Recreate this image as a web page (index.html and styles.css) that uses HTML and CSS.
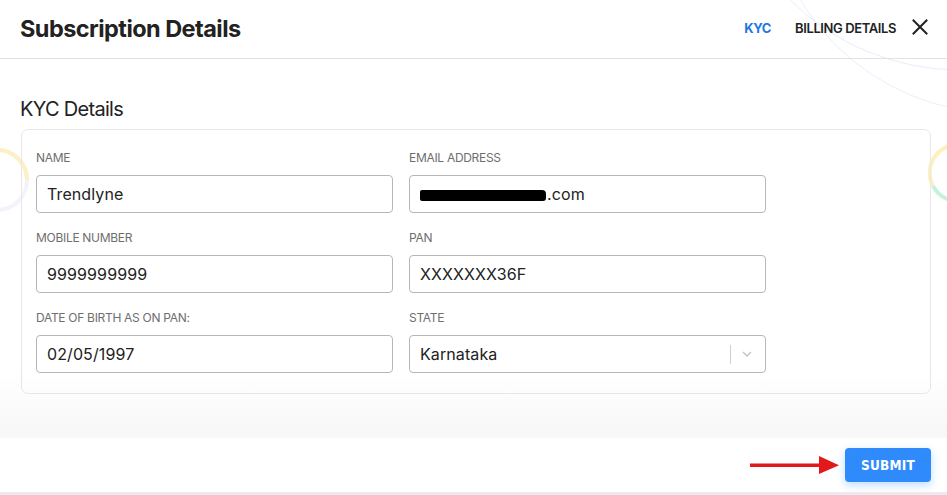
FILE: index.html
```html
<!DOCTYPE html>
<html lang="en">
<head>
<meta charset="utf-8">
<title>Subscription Details</title>
<link rel="stylesheet" href="styles.css">
</head>
<body>
<div class="modal">
  <svg class="deco deco-arcs" width="200" height="130" viewBox="747 0 200 130" aria-hidden="true">
    <circle cx="960" cy="-171" r="241" fill="none" stroke="#e6eefa" stroke-width="1"/>
    <circle cx="1000" cy="-120" r="233" fill="none" stroke="#e9f0fb" stroke-width="1"/>
  </svg>
  <svg class="deco deco-left" width="80" height="80" viewBox="-40 -40 80 80" aria-hidden="true">
    <circle cx="0" cy="0" r="30" fill="none" stroke="#f4f3fc" stroke-width="4"/>
    <path d="M -2 -30 A 30 30 0 0 1 30 0" fill="none" stroke="#fdf0c2" stroke-width="4"/>
    <path d="M -5 -29.6 A 30 30 0 0 1 0 -30" fill="none" stroke="#d9d2f7" stroke-width="4"/>
  </svg>
  <svg class="deco deco-right" width="40" height="70" viewBox="-30 -35 40 70" aria-hidden="true">
    <path d="M 8 -27 A 28 28 0 0 0 -25 13" fill="none" stroke="#fcefc0" stroke-width="4"/>
    <path d="M -25 13 A 28 28 0 0 0 8 27" fill="none" stroke="#c5f2da" stroke-width="4"/>
    <path d="M 18 -22 A 28 28 0 0 0 8 -27" fill="none" stroke="#d6ddd6" stroke-width="4"/>
  </svg>

  <header class="modal-header">
    <h1 class="modal-title">Subscription Details</h1>
    <nav class="tabs">
      <span class="tab tab-active">KYC</span>
      <span class="tab">BILLING DETAILS</span>
      <button class="close" aria-label="Close">
        <svg width="16" height="16" viewBox="0 0 16 16"><path d="M1.5 1.5 L14.5 14.5 M14.5 1.5 L1.5 14.5" stroke="#222" stroke-width="2" stroke-linecap="square"/></svg>
      </button>
    </nav>
  </header>

  <main class="modal-body">
    <h2 class="section-title">KYC Details</h2>
    <section class="card">
      <div class="form-grid">
        <div class="field">
          <label class="label">NAME</label>
          <div class="input">Trendlyne</div>
        </div>
        <div class="field">
          <label class="label">EMAIL ADDRESS</label>
          <div class="input"><span class="redact"></span>.com</div>
        </div>
        <div class="field">
          <label class="label">MOBILE NUMBER</label>
          <div class="input">9999999999</div>
        </div>
        <div class="field">
          <label class="label">PAN</label>
          <div class="input">XXXXXXX36F</div>
        </div>
        <div class="field">
          <label class="label">DATE OF BIRTH AS ON PAN:</label>
          <div class="input">02/05/1997</div>
        </div>
        <div class="field">
          <label class="label">STATE</label>
          <div class="input select">
            <span class="select-value">Karnataka</span>
            <span class="select-sep"></span>
            <svg class="chev" width="10" height="6" viewBox="0 0 10 6"><path d="M1 1 L5 5 L9 1" fill="none" stroke="#c6c6c6" stroke-width="1.5"/></svg>
          </div>
        </div>
      </div>
    </section>
  </main>

  <footer class="modal-footer">
    <svg class="arrow" width="89" height="20" viewBox="0 0 89 20" aria-hidden="true">
      <rect x="0" y="8.5" width="72" height="3.5" fill="#e2191b"/>
      <polygon points="69,1 89,10.2 69,19" fill="#e2191b"/>
    </svg>
    <button class="submit">SUBMIT</button>
  </footer>
</div>
</body>
</html>
```

FILE: styles.css
```css
* { box-sizing: border-box; }
html, body {
  margin: 0;
  padding: 0;
  background: #ebebef;
}
body {
  font-family: Inter, "Noto Sans", sans-serif;
  color: #222;
}
.modal {
  position: relative;
  height: 492px;
  background: #fff;
  overflow: hidden;
  display: flex;
  flex-direction: column;
}
.deco {
  position: absolute;
  z-index: 0;
  pointer-events: none;
}
.deco-arcs { left: 747px; top: 0; }
.deco-left { left: -43px; top: 140px; }
.deco-right { left: 928px; top: 138px; }

.modal-header {
  position: relative;
  z-index: 1;
  height: 59px;
  flex: none;
  display: flex;
  align-items: center;
  justify-content: space-between;
  padding: 0 19px 2px 20px;
  border-bottom: 1px solid #e2e2e2;
}
.modal-title {
  margin: 0;
  font-size: 23.5px;
  font-weight: 700;
  letter-spacing: -0.55px;
  color: #222;
}
.tabs {
  display: flex;
  align-items: center;
}
.tab {
  font-size: 13px;
  font-weight: 600;
  letter-spacing: -0.4px;
  color: #222;
  margin-right: 24px;
}
.tab-active {
  color: #1f76e5;
  font-weight: 700;
}
.tab:nth-child(2) { margin-right: 16px; }
.close {
  border: 0;
  background: none;
  padding: 0;
  width: 16px;
  height: 16px;
  display: flex;
  margin-top: -3px;
}

.modal-body {
  position: relative;
  z-index: 1;
  flex: 1;
  padding: 38px 16px 0 20px;
  background: linear-gradient(to bottom, rgba(255,255,255,0) 0, rgba(255,255,255,0) 82%, #f7f7f7 100%);
}
.section-title {
  margin: 0 0 8px;
  font-size: 20px;
  line-height: 24px;
  font-weight: 400;
  letter-spacing: -0.7px;
  color: #222;
}
.card {
  margin-left: 1px;
  border: 1px solid #e7e7e7;
  border-radius: 7px;
  padding: 20px 15px 20px 14px;
}
.form-grid {
  display: grid;
  grid-template-columns: 357px 357px;
  column-gap: 16px;
  row-gap: 17px;
}
.field {
  display: flex;
  flex-direction: column;
}
.label {
  font-size: 12px;
  line-height: 16px;
  letter-spacing: -0.3px;
  color: #6e6e6e;
  margin-bottom: 9px;
}
.input {
  height: 38px;
  border: 1px solid #b7b7b7;
  border-radius: 4px;
  padding: 0 10px;
  display: flex;
  align-items: center;
  font-size: 16px;
  color: #222;
  letter-spacing: 0.1px;
}
.redact {
  display: inline-block;
  width: 126px;
  height: 11px;
  background: #000;
  border-radius: 2px 4px 3px 2px;
  margin-right: 1px;
  margin-top: 2px;
}
.select {
  padding-right: 13px;
}
.select-value { flex: 1; }
.select-sep {
  width: 1px;
  height: 19px;
  background: #cfcfcf;
  margin-right: 11px;
}
.chev { display: block; }

.modal-footer {
  position: relative;
  z-index: 1;
  height: 54px;
  flex: none;
  display: flex;
  align-items: center;
  justify-content: flex-end;
  padding-right: 16px;
}
.arrow {
  display: block;
  margin-right: 6px;
}
.submit {
  width: 86px;
  height: 34px;
  border: 0;
  border-radius: 4px;
  background: #2f8bfb;
  color: #fff;
  font-family: "DejaVu Sans Condensed", "DejaVu Sans", sans-serif;
  font-weight: 700;
  font-size: 13.5px;
  letter-spacing: 0.2px;
  box-shadow: 0 3px 8px rgba(47, 139, 251, 0.3);
  padding: 0;
}
```
